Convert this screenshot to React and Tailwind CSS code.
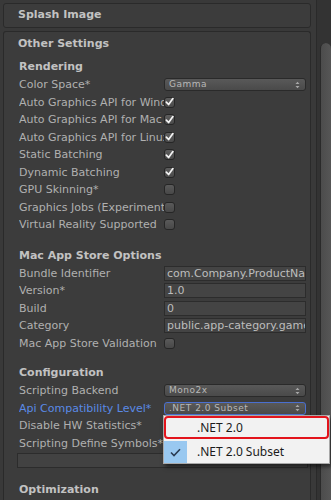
import React from 'react';

const font = { fontFamily: '"DejaVu Sans", Verdana, sans-serif' };

function Check() {
  return (
    <div className="w-[11px] h-[11px] rounded-[3px] border border-[#262626] bg-gradient-to-b from-[#5e5e5e] to-[#4a4a4a] flex items-center justify-center">
      <svg width="10" height="10" viewBox="0 0 10 10">
        <path d="M1.5 5.2 L4 7.8 L8.8 1.2" fill="none" stroke="#f4f4f4" strokeWidth="1.9" strokeLinecap="round" strokeLinejoin="round" />
      </svg>
    </div>
  );
}

function Box() {
  return <div className="w-[11px] h-[11px] rounded-[3px] border border-[#262626] bg-gradient-to-b from-[#5a5a5a] to-[#484848]" />;
}

function Select({ value, active }) {
  return (
    <div
      className={`w-[142px] h-[13px] rounded-[3px] border flex items-center justify-between pl-[4px] pr-[5px] bg-gradient-to-b from-[#595959] to-[#4a4a4a] ${
        active ? 'border-[#4a6fd0]' : 'border-[#2a2a2a]'
      }`}
    >
      <span className="text-[9px] tracking-[0.5px] text-[#b8b8b8] leading-none whitespace-nowrap">{value}</span>
      <svg width="5" height="8" viewBox="0 0 5 8">
        <path d="M0.5 3 L2.5 0.8 L4.5 3 Z M0.5 5 L2.5 7.2 L4.5 5 Z" fill="#a8a8a8" />
      </svg>
    </div>
  );
}

function Field({ value }) {
  return (
    <div className="w-[142px] h-[15px] border border-[#2c2c2c] bg-[#444444] flex items-center pl-[2px] overflow-hidden">
      <span className="text-[11px] text-[#bdbdbd] leading-none whitespace-nowrap">{value}</span>
    </div>
  );
}

function Row({ label, children, blue }) {
  return (
    <div className="flex items-center h-[17.5px]">
      <div className={`w-[145px] overflow-hidden whitespace-nowrap text-[11px] leading-none ${blue ? 'text-[#5a8ae6]' : 'text-[#b0b0b0]'}`}>
        {label}
      </div>
      <div className="flex items-center">{children}</div>
    </div>
  );
}

function Header({ children, className = '' }) {
  return (
    <div className={`h-[19px] flex items-center text-[11px] font-bold text-[#c2c2c2] leading-none ${className}`}>{children}</div>
  );
}

export default function App() {
  return (
    <div className="w-[331px] h-[500px] overflow-hidden bg-[#393939] flex" style={font}>
      <div className="w-[316px] pl-[3px] pr-[5px] pt-[3px] relative">
        {/* Splash Image */}
        <div className="h-[25px] rounded-[3px] border border-[#2a2a2a] bg-[#3c3c3c] pl-[14px] flex items-center">
          <span className="text-[11px] font-bold text-[#c2c2c2]">Splash Image</span>
        </div>

        {/* Other Settings */}
        <div className="mt-[3px] h-[480px] rounded-t-[3px] border border-b-0 border-[#2a2a2a] bg-[#3c3c3c] pl-[15px] pt-[2px]">
          <Header className="h-[18px] -ml-[1px]">Other Settings</Header>

          <Header className="mt-[4px]">Rendering</Header>
          <Row label="Color Space*"><Select value="Gamma" /></Row>
          <Row label="Auto Graphics API for Windows"><Check /></Row>
          <Row label="Auto Graphics API for Mac"><Check /></Row>
          <Row label="Auto Graphics API for Linux"><Check /></Row>
          <Row label="Static Batching"><Check /></Row>
          <Row label="Dynamic Batching"><Check /></Row>
          <Row label="GPU Skinning*"><Box /></Row>
          <Row label="Graphics Jobs (Experimental)*"><Box /></Row>
          <Row label="Virtual Reality Supported"><Box /></Row>

          <Header className="mt-[12px]">Mac App Store Options</Header>
          <Row label="Bundle Identifier"><Field value="com.Company.ProductName" /></Row>
          <Row label="Version*"><Field value="1.0" /></Row>
          <Row label="Build"><Field value="0" /></Row>
          <Row label="Category"><Field value="public.app-category.games" /></Row>
          <Row label="Mac App Store Validation"><Box /></Row>

          <Header className="mt-[11px]">Configuration</Header>
          <Row label="Scripting Backend"><Select value="Mono2x" /></Row>
          <Row label="Api Compatibility Level*" blue><Select value=".NET 2.0 Subset" active /></Row>
          <Row label="Disable HW Statistics*"><Box /></Row>
          <Row label="Scripting Define Symbols*"><Box /></Row>
          <div className="mt-[1px] -ml-[2px] w-[291px] h-[15px] border border-[#2c2c2c] bg-[#424242]" />

          <Header className="mt-[12px]">Optimization</Header>
        </div>

        {/* Popup menu */}
        <div className="absolute left-[163px] top-[415px] w-[167px] h-[49px] bg-[#f2f2f2] border border-[#a8a8a8] shadow-[2px_3px_4px_rgba(0,0,0,0.5)] z-10" style={{ fontFamily: '"Noto Sans", "Liberation Sans", sans-serif' }}>
          <div className="h-[23px] rounded-[4px] border-2 border-[#e3141c] flex items-center pl-[31px]">
            <span className="text-[12px] text-[#1b1b1b] leading-none">.NET 2.0</span>
          </div>
          <div className="h-[22px] mt-[2px] flex items-center">
            <div className="w-[23px] h-[22px] bg-[#99c8f0] flex items-center justify-center">
              <svg width="11" height="9" viewBox="0 0 11 9">
                <path d="M1 4.5 L4 7.5 L10 1.2" fill="none" stroke="#2a3b52" strokeWidth="1.6" />
              </svg>
            </div>
            <span className="ml-[10px] text-[12px] text-[#1b1b1b] leading-none">.NET 2.0 Subset</span>
          </div>
        </div>
      </div>

      {/* Scrollbar */}
      <div className="w-[15px] h-full border-l border-[#2a2a2a] bg-[#333333] pl-[3px]">
        <div className="mt-[43px] w-[11px] h-[470px] rounded-t-full bg-gradient-to-r from-[#4c4c4c] to-[#565656] border-l border-[#2a2a2a]" />
      </div>
    </div>
  );
}
